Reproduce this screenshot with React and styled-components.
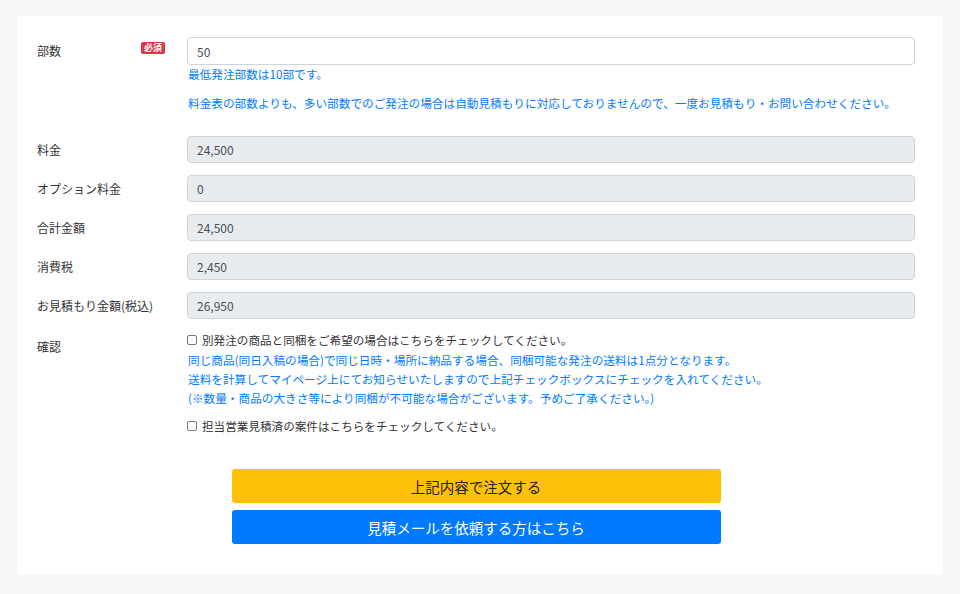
import React from "react";
import styled, { createGlobalStyle } from "styled-components";

const GlobalStyle = createGlobalStyle`
	html, body {
		margin: 0;
		padding: 0;
		background-color: #f6f6f4;
	}
	body {
		font-family: "Noto Sans CJK JP", "Noto Sans", sans-serif;
		color: #212529;
	}
`;

const Page = styled.div`
	width: 960px;
	height: 594px;
	padding: 16px 17px 19px 17px;
	box-sizing: border-box;
`;

const Card = styled.div`
	background-color: #ffffff;
	padding: 21px 28px 31px 20px;
`;

const Row = styled.div`
	display: grid;
	grid-template-columns: 150px 1fr;
	margin-bottom: ${(p) => p.gap || 12}px;
`;

const Label = styled.div`
	display: flex;
	justify-content: space-between;
	align-items: flex-start;
	padding: ${(p) => p.top || 5}px 22px 0 0;
	font-size: 12px;
	line-height: 17px;
	color: #333;
`;

const Badge = styled.span`
	display: inline-block;
	margin-top: 0;
	padding: 0 3px;
	height: 12px;
	line-height: 12px;
	font-size: 9px;
	font-weight: bold;
	color: #fff;
	background-color: #dc3545;
	border-radius: 2px;
`;

const Field = styled.div`
	display: flex;
	flex-direction: column;
`;

const Input = styled.div`
	height: ${(p) => (p.readOnly ? 27 : 28)}px;
	box-sizing: border-box;
	padding: 0 9px;
	display: flex;
	align-items: center;
	font-size: 12px;
	color: #495057;
	background-color: ${(p) => (p.readOnly ? "#e9ecef" : "#fff")};
	border: 1px solid #ced4da;
	border-radius: 4px;
`;

const Help = styled.p`
	margin: ${(p) => p.top || 0}px 0 0 1px;
	font-size: 11.65px;
	line-height: 18px;
	color: #007bff;
	white-space: nowrap;
`;

const Check = styled.label`
	display: flex;
	align-items: center;
	margin-top: ${(p) => p.top || 0}px;
	font-size: 11.6px;
	line-height: 19px;
	color: #333;
	white-space: nowrap;
`;

const Box = styled.input`
	appearance: none;
	width: 10px;
	height: 10px;
	margin: 0 5px 1px 0;
	border: 1px solid #767676;
	border-radius: 2px;
	background: #fff;
	box-sizing: border-box;
`;

const Notes = styled.div`
	font-size: 11.65px;
	line-height: 19px;
	color: #007bff;
	white-space: nowrap;
	padding-left: 1px;
`;

const Buttons = styled.div`
	width: 489px;
	margin: 33px auto 0;
	display: flex;
	flex-direction: column;
	gap: 7px;
`;

const Button = styled.button`
	height: 34px;
	border: none;
	border-radius: 3px;
	font-family: inherit;
	font-size: 14.5px;
	color: ${(p) => (p.variant === "primary" ? "#fff" : "#212529")};
	background-color: ${(p) => (p.variant === "primary" ? "#007bff" : "#ffc107")};
	cursor: pointer;
`;

const prices = [
	["料金", "24,500"],
	["オプション料金", "0"],
	["合計金額", "24,500"],
	["消費税", "2,450"],
	["お見積もり金額(税込)", "26,950"],
];

export default function App() {
	return (
		<Page>
			<GlobalStyle />
			<Card>
				<Row gap={24}>
					<Label>
						部数
						<Badge>必須</Badge>
					</Label>
					<Field>
						<Input>50</Input>
						<Help>最低発注部数は10部です。</Help>
						<Help top={11}>
							料金表の部数よりも、多い部数でのご発注の場合は自動見積もりに対応しておりませんので、一度お見積もり・お問い合わせください。
						</Help>
					</Field>
				</Row>
				{prices.map(([label, value]) => (
					<Row key={label}>
						<Label>{label}</Label>
						<Input readOnly>{value}</Input>
					</Row>
				))}
				<Row gap={0}>
					<Label top={7}>確認</Label>
					<Field>
						<Check>
							<Box type="checkbox" />
							別発注の商品と同梱をご希望の場合はこちらをチェックしてください。
						</Check>
						<Notes>
							同じ商品(同日入稿の場合)で同じ日時・場所に納品する場合、同梱可能な発注の送料は1点分となります。
							<br />
							送料を計算してマイページ上にてお知らせいたしますので上記チェックボックスにチェックを入れてください。
							<br />
							(※数量・商品の大きさ等により同梱が不可能な場合がございます。予めご了承ください。)
						</Notes>
						<Check top={10}>
							<Box type="checkbox" />
							担当営業見積済の案件はこちらをチェックしてください。
						</Check>
					</Field>
				</Row>
				<Buttons>
					<Button>上記内容で注文する</Button>
					<Button variant="primary">見積メールを依頼する方はこちら</Button>
				</Buttons>
			</Card>
		</Page>
	);
}
